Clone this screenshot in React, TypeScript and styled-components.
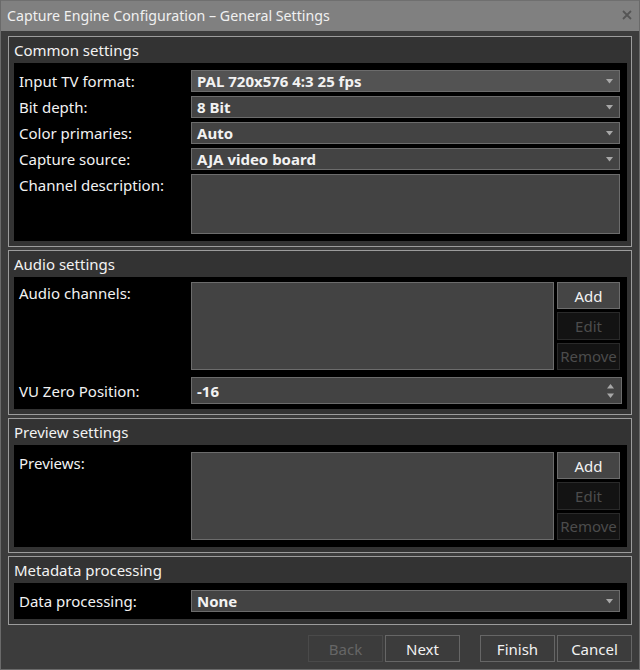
import { createGlobalStyle, styled } from "styled-components";

const GlobalStyle = createGlobalStyle`
  html, body {
    margin: 0;
    padding: 0;
    background: #3c3c3c;
  }
  * {
    box-sizing: border-box;
  }
`;

const Window = styled.div`
  width: 640px;
  height: 670px;
  display: flex;
  flex-direction: column;
  background: #3c3c3c;
  border: 1px solid #6a6a6a;
  border-top: none;
  font-family: "Segoe UI", "Noto Sans", "Open Sans", sans-serif;
  font-size: 15px;
  color: #f2f2f2;
`;

const TitleBar = styled.div`
  height: 31px;
  flex: none;
  display: flex;
  align-items: center;
  justify-content: space-between;
  padding: 0 7px 2px 6px;
  background: #808080;
  border-top: 1px solid #6f6f6f;
  font-size: 14.2px;
  color: #f0f0f0;
`;

const CloseIcon = () => (
  <svg width="10" height="10" viewBox="0 0 10 10">
    <path d="M1 1 L9 9 M9 1 L1 9" stroke="#555" strokeWidth="1.8" />
  </svg>
);

const Content = styled.div`
  display: flex;
  flex-direction: column;
  gap: 3px;
  padding: 5px 7px 0 7px;
`;

const GroupBox = styled.section`
  border: 1px solid #9c9c9c;
  background: #333333;
  padding: 0 4px 5px 5px;
`;

const GroupHeader = styled.div`
  height: 26px;
  display: flex;
  align-items: center;
  font-size: 15px;
  padding-bottom: 1px;
`;

const Panel = styled.div<{ $pad: string }>`
  background: #000;
  padding: ${(p) => p.$pad};
`;

const FormGrid = styled.div<{ $rowGap?: number }>`
  display: grid;
  grid-template-columns: 172px 1fr;
  row-gap: ${(p) => p.$rowGap ?? 4}px;
  align-items: center;
  padding-left: 5px;
`;

const Label = styled.div<{ $top?: boolean }>`
  align-self: ${(p) => (p.$top ? "start" : "center")};
  line-height: 20px;
  padding-top: ${(p) => (p.$top ? "1px" : "0")};
  white-space: nowrap;
`;

const Select = styled.div<{ $hot?: boolean }>`
  height: 22px;
  display: flex;
  align-items: center;
  justify-content: space-between;
  padding: 0 6px 0 5px;
  background: ${(p) => (p.$hot ? "#535353" : "#434343")};
  border: 1px solid #6c6c6c;
  font-weight: 700;
  line-height: 20px;
`;

const Arrow = () => (
  <svg width="7" height="5" viewBox="0 0 7 5">
    <path d="M0 0 H7 L3.5 4.5 Z" fill="#a8a8a8" />
  </svg>
);

const SpinArrows = () => (
  <svg width="7" height="14" viewBox="0 0 7 14">
    <path d="M0 4.5 H7 L3.5 0 Z M0 9.5 H7 L3.5 14 Z" fill="#a8a8a8" />
  </svg>
);

const TextArea = styled.div`
  height: 60px;
  background: #434343;
  border: 1px solid #6c6c6c;
`;

const SpinBox = styled(Select)`
  height: 27px;
  margin-right: -2px;
  padding-right: 7px;
`;

const ListRow = styled.div`
  display: grid;
  grid-template-columns: 1fr 63px;
  column-gap: 3px;
  height: 88px;
`;

const ListBox = styled.div`
  background: #434343;
  border: 1px solid #6c6c6c;
`;

const SideButtons = styled.div`
  display: grid;
  grid-template-rows: repeat(3, 1fr);
  row-gap: 3px;
`;

const SideButton = styled.button<{ $disabled?: boolean }>`
  font: inherit;
  font-size: 15px;
  padding: 0;
  background: ${(p) => (p.$disabled ? "#131313" : "#454545")};
  border: 1px solid ${(p) => (p.$disabled ? "#2a2a2a" : "#6c6c6c")};
  color: ${(p) => (p.$disabled ? "#4c4c4c" : "#f2f2f2")};
`;

const Footer = styled.div`
  display: flex;
  justify-content: flex-end;
  gap: 2px;
  padding: 10px 7px 0 0;
`;

const FooterButton = styled.button<{ $disabled?: boolean; $gapAfter?: boolean }>`
  width: 75px;
  height: 27px;
  font: inherit;
  font-size: 15px;
  padding: 0;
  margin-right: ${(p) => (p.$gapAfter ? "18px" : "0")};
  background: #3c3c3c;
  border: 1px solid ${(p) => (p.$disabled ? "#4a4a4a" : "#666666")};
  color: ${(p) => (p.$disabled ? "#666666" : "#f2f2f2")};
`;

export default function App() {
  return (
    <>
      <GlobalStyle />
      <Window>
        <TitleBar>
          <span>Capture Engine Configuration – General Settings</span>
          <CloseIcon />
        </TitleBar>
        <Content>
          <GroupBox>
            <GroupHeader>Common settings</GroupHeader>
            <Panel $pad="7px 7px 7px 0">
              <FormGrid>
                <Label>Input TV format:</Label>
                <Select $hot>
                  <span>PAL 720x576 4:3 25 fps</span>
                  <Arrow />
                </Select>
                <Label>Bit depth:</Label>
                <Select>
                  <span>8 Bit</span>
                  <Arrow />
                </Select>
                <Label>Color primaries:</Label>
                <Select>
                  <span>Auto</span>
                  <Arrow />
                </Select>
                <Label>Capture source:</Label>
                <Select>
                  <span>AJA video board</span>
                  <Arrow />
                </Select>
                <Label $top>Channel description:</Label>
                <TextArea />
              </FormGrid>
            </Panel>
          </GroupBox>

          <GroupBox>
            <GroupHeader>Audio settings</GroupHeader>
            <Panel $pad="5px 7px 5px 0">
              <FormGrid $rowGap={7}>
                <Label $top>Audio channels:</Label>
                <ListRow>
                  <ListBox />
                  <SideButtons>
                    <SideButton>Add</SideButton>
                    <SideButton $disabled>Edit</SideButton>
                    <SideButton $disabled>Remove</SideButton>
                  </SideButtons>
                </ListRow>
                <Label>VU Zero Position:</Label>
                <SpinBox>
                  <span>-16</span>
                  <SpinArrows />
                </SpinBox>
              </FormGrid>
            </Panel>
          </GroupBox>

          <GroupBox>
            <GroupHeader>Preview settings</GroupHeader>
            <Panel $pad="7px 7px 7px 0">
              <FormGrid>
                <Label $top>Previews:</Label>
                <ListRow>
                  <ListBox />
                  <SideButtons>
                    <SideButton>Add</SideButton>
                    <SideButton $disabled>Edit</SideButton>
                    <SideButton $disabled>Remove</SideButton>
                  </SideButtons>
                </ListRow>
              </FormGrid>
            </Panel>
          </GroupBox>

          <GroupBox>
            <GroupHeader>Metadata processing</GroupHeader>
            <Panel $pad="7px 7px 7px 0">
              <FormGrid>
                <Label>Data processing:</Label>
                <Select>
                  <span>None</span>
                  <Arrow />
                </Select>
              </FormGrid>
            </Panel>
          </GroupBox>
        </Content>
        <Footer>
          <FooterButton $disabled>Back</FooterButton>
          <FooterButton $gapAfter>Next</FooterButton>
          <FooterButton>Finish</FooterButton>
          <FooterButton>Cancel</FooterButton>
        </Footer>
      </Window>
    </>
  );
}
